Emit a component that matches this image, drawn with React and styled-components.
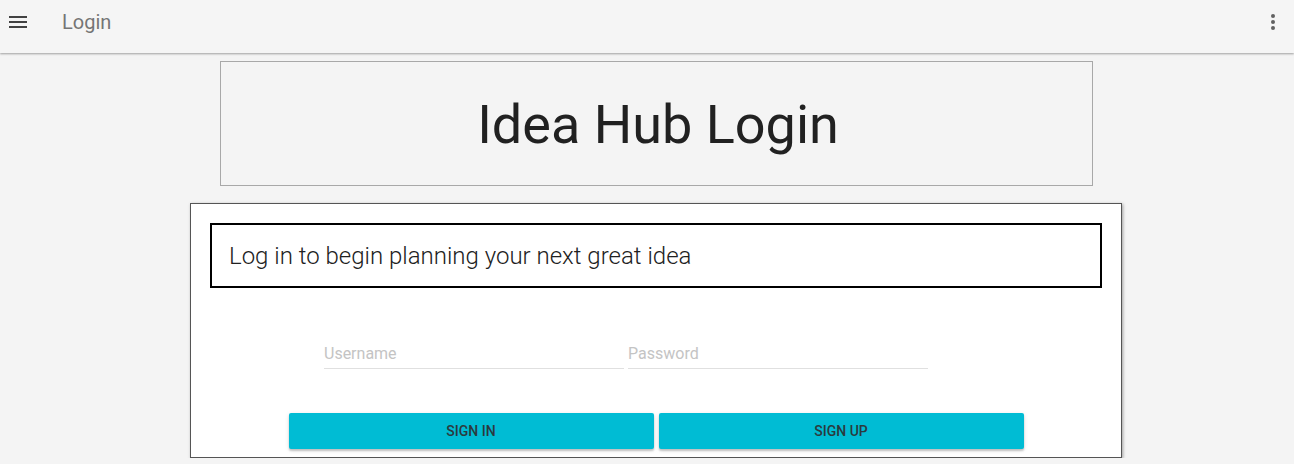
import React from "react";
import styled, { createGlobalStyle } from "styled-components";

const GlobalStyle = createGlobalStyle`
  html, body {
    margin: 0;
    padding: 0;
    background: #f4f4f4;
    font-family: Roboto, "Liberation Sans", sans-serif;
  }
`;

const Header = styled.header`
  height: 53px;
  display: flex;
  align-items: center;
  background: #f5f5f5;
  box-shadow: 0 1px 2px rgba(0, 0, 0, 0.35);
  position: relative;
  z-index: 1;
`;

const IconButton = styled.button`
  width: 36px;
  height: 36px;
  border: none;
  background: transparent;
  padding: 0;
  display: flex;
  align-items: center;
  justify-content: center;
  margin: ${(p) => p.$margin || "0"};
`;

const HeaderTitle = styled.span`
  font-size: 20px;
  color: #757575;
  margin-left: 26px;
  margin-top: -10px;
`;

const Spacer = styled.div`
  flex: 1;
`;

const Main = styled.main`
  padding: 8px 0 0 18px;
  display: flex;
  flex-direction: column;
  align-items: center;
`;

const TitleBox = styled.div`
  width: 873px;
  height: 125px;
  box-sizing: border-box;
  border: 1px solid #a8a8a8;
  display: flex;
  align-items: center;
  justify-content: center;
`;

const Title = styled.h1`
  margin: 2px 0 0 4px;
  font-size: 54px;
  font-weight: 400;
  color: #212121;
`;

const Card = styled.section`
  width: 932px;
  margin-top: 17px;
  box-sizing: border-box;
  background: #fff;
  border: 1px solid #555;
  box-shadow: 1px 1px 3px rgba(0, 0, 0, 0.35);
  padding: 19px 19px 8px;
`;

const Banner = styled.div`
  height: 65px;
  box-sizing: border-box;
  border: 2px solid #000;
  display: flex;
  align-items: center;
  padding-left: 17px;
  font-size: 24px;
  font-weight: 300;
  color: #212121;
`;

const Fields = styled.div`
  display: flex;
  gap: 4px;
  padding-left: 114px;
  margin-top: 52px;
`;

const Field = styled.input`
  width: 300px;
  box-sizing: border-box;
  border: none;
  border-bottom: 1px solid #e0e0e0;
  padding: 4px 0 5px;
  font-family: inherit;
  font-size: 16px;
  background: transparent;
  outline: none;

  &::placeholder {
    color: #c4c4c4;
  }
`;

const Actions = styled.div`
  display: flex;
  justify-content: center;
  gap: 5px;
  margin-top: 44px;
`;

const ActionButton = styled.button`
  width: 365px;
  height: 36px;
  border: none;
  border-radius: 2px;
  background: #00bcd4;
  color: #2b3a3e;
  font-family: inherit;
  font-size: 14px;
  font-weight: 500;
  text-transform: uppercase;
  box-shadow: 0 2px 2px rgba(0, 0, 0, 0.2), 0 1px 5px rgba(0, 0, 0, 0.1);
  cursor: pointer;
`;

const MenuIcon = () => (
  <svg width="24" height="24" viewBox="0 0 24 24">
    <path d="M3 18h18v-2H3v2zm0-5h18v-2H3v2zm0-7v2h18V6H3z" fill="#424242" />
  </svg>
);

const MoreIcon = () => (
  <svg width="24" height="24" viewBox="0 0 24 24">
    <circle cx="12" cy="6" r="2" fill="#616161" />
    <circle cx="12" cy="12" r="2" fill="#616161" />
    <circle cx="12" cy="18" r="2" fill="#616161" />
  </svg>
);

export default function App() {
  return (
    <>
      <GlobalStyle />
      <Header>
        <IconButton $margin="-10px 0 0 0" aria-label="menu">
          <MenuIcon />
        </IconButton>
        <HeaderTitle>Login</HeaderTitle>
        <Spacer />
        <IconButton $margin="-10px 3px 0 0" aria-label="more">
          <MoreIcon />
        </IconButton>
      </Header>
      <Main>
        <TitleBox>
          <Title>Idea Hub Login</Title>
        </TitleBox>
        <Card>
          <Banner>Log in to begin planning your next great idea</Banner>
          <Fields>
            <Field type="text" placeholder="Username" />
            <Field type="password" placeholder="Password" />
          </Fields>
          <Actions>
            <ActionButton>Sign in</ActionButton>
            <ActionButton>Sign up</ActionButton>
          </Actions>
        </Card>
      </Main>
    </>
  );
}
